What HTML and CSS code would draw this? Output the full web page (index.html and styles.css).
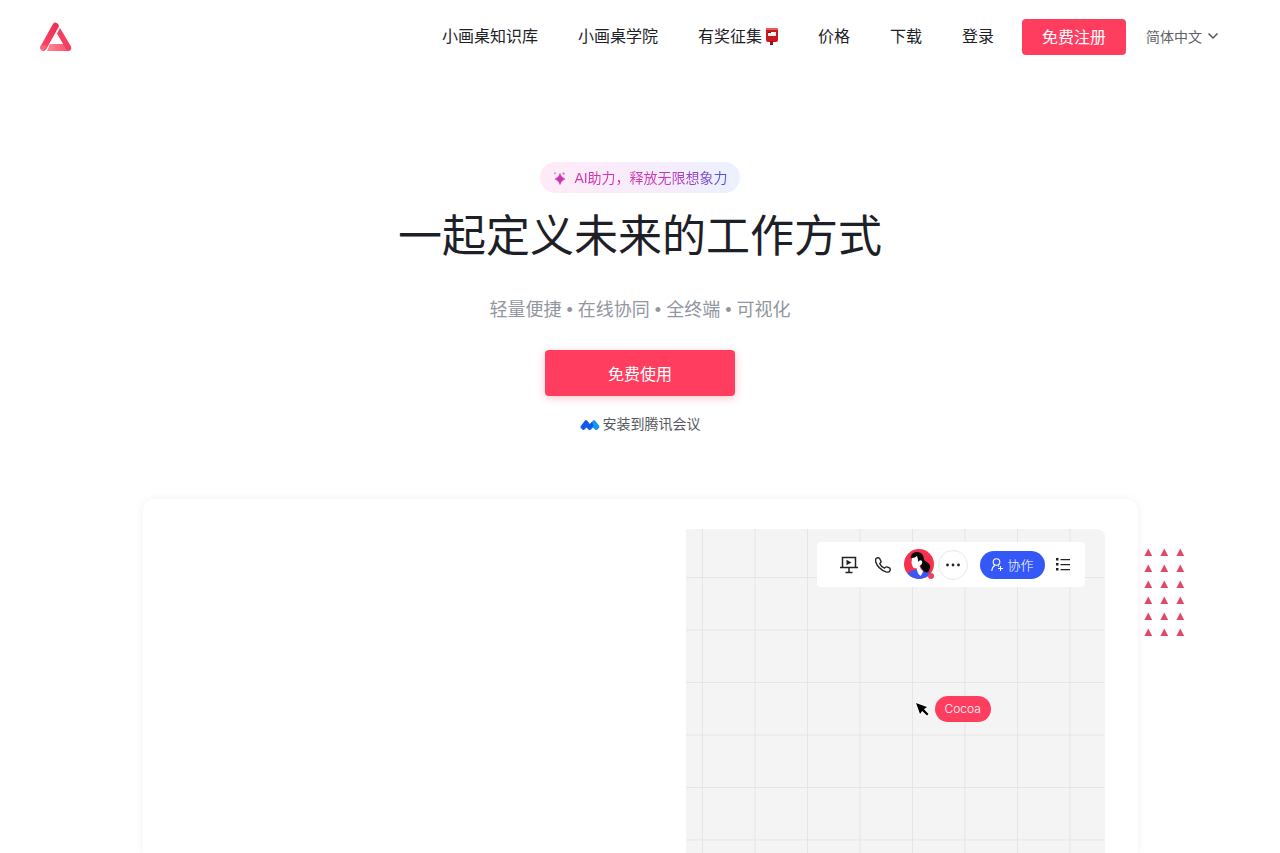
FILE: index.html
```html
<!DOCTYPE html>
<html lang="zh-CN">
<head>
<meta charset="utf-8">
<meta name="viewport" content="width=device-width, initial-scale=1">
<title>小画桌</title>
<link rel="stylesheet" href="styles.css">
</head>
<body>
<header class="header">
  <a class="logo" href="#" aria-label="小画桌">
    <svg width="32" height="30" viewBox="0 0 32 30">
      <defs>
        <linearGradient id="bar" x1="0" y1="1" x2="1" y2="0"><stop offset="0" stop-color="#f8475f"/><stop offset="1" stop-color="#ee3058"/></linearGradient>
        <linearGradient id="base" x1="0" y1="0" x2="1" y2="0"><stop offset="0" stop-color="#ff8796"/><stop offset="1" stop-color="#f5506b"/></linearGradient>
      </defs>
      <path d="M10 22H26L30 27Q30 29 28 29H7Z" fill="url(#base)"/>
      <path d="M20 6L31 24.500Q32 28 29 29Q27 29 26 27L17 11.500Z" fill="#f43f60"/>
      <path d="M3.500 25.500L15.500 4" stroke="url(#bar)" stroke-width="6.500" stroke-linecap="round"/>
      <path d="M1 23.500H7L4.500 28Q3.500 29 2 28.500Q-.5 27 1 23.500Z" fill="#fa667b"/>
    </svg>
  </a>
  <nav class="nav">
    <a href="#">小画桌知识库</a>
    <a href="#">小画桌学院</a>
    <a class="nav-post" href="#">有奖征集<svg width="16" height="18" viewBox="0 0 16 18" aria-hidden="true"><path d="M4 0H14Q16 0 16 2V12Q16 14 14 14H11V17H8V14H6Q4 14 4 12Z" fill="#c91820"/><path d="M4 0H14Q16 0 16 2H4Z" fill="#ed5a5c"/><path d="M6 4H14V8H6Z" fill="#fff4f2"/><path d="M6 4H9V5H6Z" fill="#7d1518"/><path d="M8 13H11V17H8Z" fill="#98131c"/></svg></a>
    <a href="#">价格</a>
    <a href="#">下载</a>
    <a href="#">登录</a>
  </nav>
  <button class="register" type="button">免费注册</button>
  <button class="language" type="button">简体中文<svg width="12" height="8" viewBox="0 0 12 8" fill="none" stroke="#4b4d52" stroke-width="1.400"><path d="M1.500 1.500L6 6L10.500 1.500"/></svg></button>
</header>
<main class="hero">
  <p class="ai-tag">
    <svg width="14" height="14" viewBox="0 0 14 14"><path d="M8 2.500Q9 6.500 13 8Q9 9.500 8 13.500Q7 9.500 3 8Q7 6.500 8 2.500Z" fill="#cb35b0" stroke="#cb35b0" stroke-width=".6"/><path d="M3 1L4.200 2.200L3 3.400L1.800 2.200ZM11.500 1L13 2.500L11.500 4L10 2.500Z" fill="#c488c5"/></svg>
    <span class="ai-text">AI助力<span class="comma">，</span>释放无限想象力</span>
  </p>
  <h1 class="title">一起定义未来的工作方式</h1>
  <p class="subtitle">轻量便捷 • 在线协同 • 全终端 • 可视化</p>
  <button class="start" type="button">免费使用</button>
  <a class="meeting" href="#">
    <svg width="20" height="12" viewBox="0 0 20 12"><path d="M9 7L13 1.500Q14 .5 15 1.500L19 6.500Q20 8 19 9L17 11Q16 11.500 15 10.500L13 8.500L10.500 11Z" fill="#1296f3"/><path d="M.8 7L5 1.500Q6 .5 7 1.500L9.800 5L12 2.700L13.500 7L10.500 10.500Q9.500 11.500 8.500 10.500L6.500 8.500L4.500 10.500Q3.500 11.500 2.500 10.500L.8 9Q0 8 .8 7Z" fill="#1558e5"/></svg>
    安装到腾讯会议
  </a>
  <section class="card">
    <svg class="dots" width="42" height="90" viewBox="0 0 42 90" aria-hidden="true">
      <defs><pattern id="tri" width="16" height="16" patternUnits="userSpaceOnUse"><path d="M5.300 1.500L9.200 9H1.400Z" fill="#e34764"/></pattern></defs>
      <path d="M0 0H42V90H0Z" fill="url(#tri)"/>
    </svg>
    <div class="board">
      <svg class="grid" width="100%" height="100%" aria-hidden="true">
        <defs><pattern id="cell" x="16" y="48" width="52.500" height="52.500" patternUnits="userSpaceOnUse"><path d="M0 .5H52.500M.5 0V52.500" stroke="#e5e5e5" fill="none"/></pattern></defs>
        <rect width="100%" height="100%" fill="url(#cell)"/>
      </svg>
      <div class="toolbar">
        <svg class="present" width="18" height="18" viewBox="0 0 18 18" fill="none" stroke="#222" stroke-width="1.500"><path d="M2.500 11V1.500H15.500V11M0 11.500H18M9 12V16.500M5.500 16.500H12.500"/><path d="M6.500 3.800L11.500 6.500L6.500 9.200Z" fill="#222" stroke="none"/></svg>
        <svg class="phone" width="16" height="16" viewBox="0 0 16 16" fill="none" stroke="#222" stroke-width="1.400" stroke-linejoin="round"><path d="M1 1.500Q3 .2 4.500 1.300L6 4.200Q6.300 5.500 4.700 6.500Q6 9.700 9.500 11.200Q10.500 9.600 11.700 9.900L14.500 10.900Q15.800 12 14.700 14.200Q13.500 15.600 11 14.800Q3 12 .8 5Q.3 2.700 1 1.500Z"/></svg>
        <svg class="avatar" width="31" height="31" viewBox="0 0 31 31">
          <defs><clipPath id="face"><circle cx="15" cy="15" r="15"/></clipPath></defs>
          <g clip-path="url(#face)">
            <path d="M0 0H31V31H0Z" fill="#f5314f"/>
            <path d="M3 25Q8 20 14 21L28 24V31H3Z" fill="#3b58f3"/>
            <path d="M6.500 9Q7 3 13 3Q19 3 20 10Q20 12 23 13Q28 16 25 22Q23 25 19 21.500L15 15L13 9Z" fill="#090909"/>
            <path d="M8 9Q11 9 13 7Q14 9 14 13Q16 10 18 12Q19 15 15.500 17Q16 20 19 22Q18 26 16.500 27Q13 24 12.500 19Q9 20 8.500 17L7.500 14Z" fill="#fff"/>
          </g>
          <circle cx="27" cy="27" r="3" fill="#f33f5d"/>
        </svg>
        <span class="more"><svg width="14" height="4" viewBox="0 0 14 4" fill="#222"><circle cx="1.500" cy="2" r="1.400"/><circle cx="7" cy="2" r="1.400"/><circle cx="12.500" cy="2" r="1.400"/></svg></span>
        <button class="collab" type="button"><svg width="13" height="14" viewBox="0 0 13 14" fill="none" stroke="#fff" stroke-width="1.100"><circle cx="5.500" cy="4" r="3.300"/><path d="M.8 13Q1 9 4 7.300M7 7.300L8 8.500M7 10.500H12M9.500 8V13"/></svg>协作</button>
        <svg class="list" width="14" height="13" viewBox="0 0 14 13"><path d="M0 0H2.500V2.500H0ZM0 5H2.500V7.500H0ZM0 10H2.500V12.500H0ZM4.500 1H14V2.200H4.500ZM4.500 6H14V7.200H4.500ZM4.500 11H14V12.200H4.500Z" fill="#222"/></svg>
      </div>
      <div class="cursor">
        <svg width="15" height="15" viewBox="0 0 15 15"><path d="M1 1L12 5L9 7.200L13.500 12L12 13.500L7.200 9L5 12Z" fill="#000" stroke="#fff" stroke-width="2" paint-order="stroke"/></svg>
        <span>Cocoa</span>
      </div>
    </div>
  </section>
</main>
</body>
</html>
```
FILE: styles.css
```css
* {
  box-sizing: border-box;
}

body {
  display: flex;
  flex-direction: column;
  min-height: 100vh;
  margin: 0;
  background: #fff;
  color: #1d2026;
  font-family: "Liberation Sans", "Noto Sans CJK SC", sans-serif;
}

a {
  color: inherit;
  text-decoration: none;
}

button {
  border: 0;
  font-family: inherit;
  cursor: pointer;
}

svg {
  flex: none;
  display: block;
}

.header {
  display: flex;
  align-items: center;
  height: 74px;
  padding: 0 61px 0 40px;
}

.logo {
  margin-right: auto;
}

.nav {
  display: flex;
  gap: 40px;
  margin-right: 28px;
  font-size: 16px;
  line-height: 24px;
}

.nav-post {
  display: flex;
  align-items: center;
}

.register {
  height: 36px;
  margin-right: 20px;
  padding: 0 20px 2px;
  border-radius: 4px;
  background: #ff3e5f;
  color: #fff;
  font-size: 16px;
}

.language {
  display: flex;
  align-items: center;
  gap: 5px;
  padding: 0 0 2px;
  background: none;
  color: #5f6166;
  font-size: 14px;
}

.hero {
  display: flex;
  flex: 1;
  flex-direction: column;
  align-items: center;
  padding-top: 88px;
  overflow: hidden;
}

.ai-tag {
  display: flex;
  align-items: center;
  gap: 8px;
  height: 31px;
  margin: 0 0 16px;
  padding: 0 12px;
  border-radius: 16px;
  background: linear-gradient(90deg, #ffebf7, #f6ecfc 60%, #ebf1ff);
  font-size: 14px;
}

.ai-text {
  padding-bottom: 2px;
  background: linear-gradient(90deg, #d534a9, #cb38b8 60%, #4b59dc);
  background-clip: text;
  color: transparent;
}

.comma {
  font-family: "Noto Sans CJK TC", sans-serif;
  line-height: 1;
}

.title {
  margin: 0 0 32px;
  font-size: 44px;
  font-weight: 400;
  line-height: 56px;
}

.subtitle {
  margin: 0 0 27px;
  color: #9296a0;
  font-size: 18px;
  line-height: 26px;
}

.start {
  width: 190px;
  height: 46px;
  margin-bottom: 18px;
  padding-bottom: 2px;
  border-radius: 4px;
  background: #ff3e5f;
  box-shadow: 0 2px 8px rgba(255, 62, 95, 0.3);
  color: #fff;
  font-size: 16px;
}

.meeting {
  display: flex;
  align-items: center;
  gap: 3px;
  margin-bottom: 64px;
  color: #55575e;
  font-size: 14px;
  line-height: 21px;
}

.card {
  position: relative;
  display: flex;
  flex: 1;
  justify-content: flex-end;
  width: 78%;
  max-width: 995px;
  min-height: 354px;
  padding: 30px 33px 0;
  border-radius: 12px 12px 0 0;
  box-shadow: 0 0 10px rgba(0, 0, 0, 0.06);
}

.dots {
  position: absolute;
  top: 48px;
  left: calc(100% + 5px);
}

.board {
  position: relative;
  width: 45%;
  min-width: 418px;
  border-radius: 0 8px 0 0;
  background: #f4f4f4;
  overflow: hidden;
}

.grid {
  position: absolute;
  inset: 0;
}

.toolbar {
  position: relative;
  display: flex;
  align-items: center;
  width: 268px;
  height: 45px;
  margin: 13px 20px 0 auto;
  padding: 0 16px 0 23px;
  border-radius: 4px;
  background: #fff;
}

.phone {
  margin-left: 17px;
}

.avatar {
  margin-left: 13px;
}

.more {
  display: flex;
  flex: none;
  align-items: center;
  justify-content: center;
  width: 30px;
  height: 30px;
  margin: 0 12px 0 3px;
  border: 1px solid #e8e8e8;
  border-radius: 50%;
}

.collab {
  display: flex;
  flex: none;
  align-items: center;
  gap: 4px;
  height: 28px;
  margin-right: 11px;
  padding: 0 11px;
  border-radius: 14px;
  background: #3458f8;
  color: #fff;
  font-size: 13px;
  font-weight: 300;
}

.cursor {
  position: absolute;
  top: 167px;
  left: 229px;
  display: flex;
  align-items: center;
  gap: 5px;
}

.cursor span {
  padding: 0 10px 0 9px;
  border-radius: 13px;
  background: #ff3e5f;
  color: #fff;
  font-family: Inter, sans-serif;
  font-size: 12px;
  font-weight: 300;
  line-height: 26px;
}
```
